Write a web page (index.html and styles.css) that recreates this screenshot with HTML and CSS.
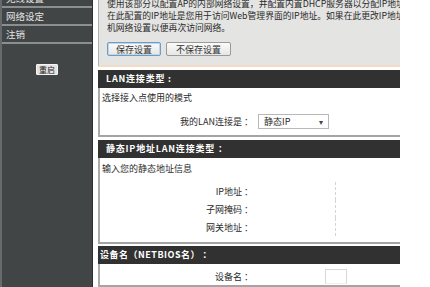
FILE: index.html
```html
<!DOCTYPE html>
<html lang="zh-CN">
<head>
    <meta charset="UTF-8">
    <meta name="viewport" content="width=device-width, initial-scale=1.0">
    <title>网络设定</title>
    <link rel="stylesheet" href="styles.css">
</head>
<body>
    <div class="page">
        <aside class="sidebar">
            <ul class="nav">
                <li>无线设置</li>
                <li>网络设定</li>
                <li>注销</li>
            </ul>
            <div class="reboot">
                <button class="reboot-btn">重启</button>
            </div>
        </aside>

        <main class="content">
            <div class="intro">
                <p class="intro-text">使用该部分以配置AP的内部网络设置，并配置内置DHCP服务器以分配IP地址到<br>在此配置的IP地址是您用于访问Web管理界面的IP地址。如果在此更改IP地址<br>机网络设置以便再次访问网络。</p>
                <div class="actions">
                    <button class="btn btn-focus">保存设置</button>
                    <button class="btn">不保存设置</button>
                </div>
            </div>

            <section class="box box-lan">
                <h2 class="box-title">LAN连接类型 :</h2>
                <div class="box-body">
                    <p class="hint">选择接入点使用的模式</p>
                    <div class="row row-select">
                        <span class="label">我的LAN连接是 ：</span>
                        <span class="select">静态IP<span class="arrow">▾</span></span>
                    </div>
                </div>
            </section>

            <section class="box box-static">
                <h2 class="box-title">静态IP地址LAN连接类型 ：</h2>
                <div class="box-body">
                    <p class="hint">输入您的静态地址信息</p>
                    <div class="fields">
                        <div class="row">
                            <span class="label">IP地址 ：</span>
                            <span class="field"></span>
                        </div>
                        <div class="row">
                            <span class="label">子网掩码 ：</span>
                            <span class="field"></span>
                        </div>
                        <div class="row">
                            <span class="label">网关地址 ：</span>
                            <span class="field"></span>
                        </div>
                    </div>
                </div>
            </section>

            <section class="box box-name">
                <h2 class="box-title">设备名（NETBIOS名） ：</h2>
                <div class="box-body">
                    <div class="row">
                        <span class="label">设备名 ：</span>
                        <span class="field-name"></span>
                    </div>
                </div>
            </section>
        </main>
    </div>
</body>
</html>
```

FILE: styles.css
```css
body {
    margin: 0;
    background: #fff;
    font-family: "Noto Sans CJK SC", "Liberation Sans", sans-serif;
    font-size: 9px;
    color: #2a2a2a;
    overflow: hidden;
}

.page {
    display: flex;
    height: 287px;
    overflow: hidden;
}

.sidebar {
    width: 90px;
    background: #414546;
    border-left: 2px solid #666a6a;
    border-right: 1px solid #2e3232;
    flex-shrink: 0;
}

.nav {
    list-style: none;
    margin: -10px 0 0;
    padding: 0;
}

.nav li {
    height: 16px;
    line-height: 16px;
    padding-left: 4px;
    color: #e4e4e4;
    font-size: 9.5px;
    border-bottom: 2px solid #8c8f8f;
}

.reboot {
    display: flex;
    justify-content: center;
    margin-top: 20px;
}

.reboot-btn {
    font-family: inherit;
    font-size: 8px;
    line-height: 9px;
    padding: 0 2px;
    background: #e2e2e2;
    color: #222;
    border: 1px solid #f4f4f4;
    border-radius: 1px;
}

.content {
    margin-left: 5px;
    width: 302px;
    flex-shrink: 0;
    margin-top: -6px;
}

.intro {
    background: #e4e4e3;
    border-left: 1px solid #b0b0b0;
    border-bottom: 2px solid #f2dcc6;
    padding: 4px 0 9px 8px;
    margin-bottom: 3px;
    overflow: hidden;
}

.intro-text {
    margin: 0;
    line-height: 12px;
    font-size: 8.8px;
    white-space: nowrap;
}

.actions {
    display: flex;
    gap: 5px;
    margin-top: 8px;
}

.btn {
    font-family: inherit;
    font-size: 9px;
    height: 14px;
    line-height: 11px;
    padding: 0 9px;
    color: #333;
    background: linear-gradient(#fbfbfb, #e6e6e6);
    border: 1px solid #9a9a9a;
    border-radius: 2px;
}

.btn-focus {
    border-color: #6f9cc0;
    box-shadow: inset 0 0 0 1px #bcd6ec;
    padding: 0 8px;
}

.box-title {
    margin: 0;
    height: 18px;
    line-height: 18px;
    background: #313131;
    color: #fff;
    font-size: 9px;
    font-weight: bold;
    letter-spacing: 0.8px;
    padding-left: 8px;
}

.box-body {
    border-left: 2px solid #ababab;
    border-bottom: 2px solid #a4a4a4;
    padding-left: 2px;
}

.box-lan {
    margin-bottom: 3px;
}

.box-lan .box-body {
    padding-top: 4px;
    padding-bottom: 5px;
}

.box-static {
    margin-bottom: 2px;
}

.box-static .box-body {
    padding-top: 5px;
    padding-bottom: 6px;
}

.box-name .box-title {
    padding-left: 2px;
    letter-spacing: 0.5px;
}

.box-name .box-body {
    padding-top: 3px;
}

.hint {
    margin: 0;
    line-height: 12px;
}

.row {
    display: flex;
    align-items: center;
    height: 18px;
}

.label {
    width: 151px;
    text-align: right;
    margin-right: 5px;
}

.row-select {
    margin-top: 8px;
}

.select {
    display: flex;
    align-items: center;
    width: 64px;
    height: 13px;
    padding-left: 5px;
    border: 1px solid #b8b8b8;
    background: #fff;
}

.arrow {
    margin-left: auto;
    margin-right: 5px;
    font-size: 8px;
    color: #444;
}

.fields {
    margin-top: 7px;
}

.field {
    width: 77px;
    height: 18px;
    border-right: 1px dashed #d4d4d4;
}

.field-name {
    width: 20px;
    height: 13px;
    margin-left: 67px;
    border: 1px solid #d8d8d8;
    border-bottom-color: #eee;
}
```
